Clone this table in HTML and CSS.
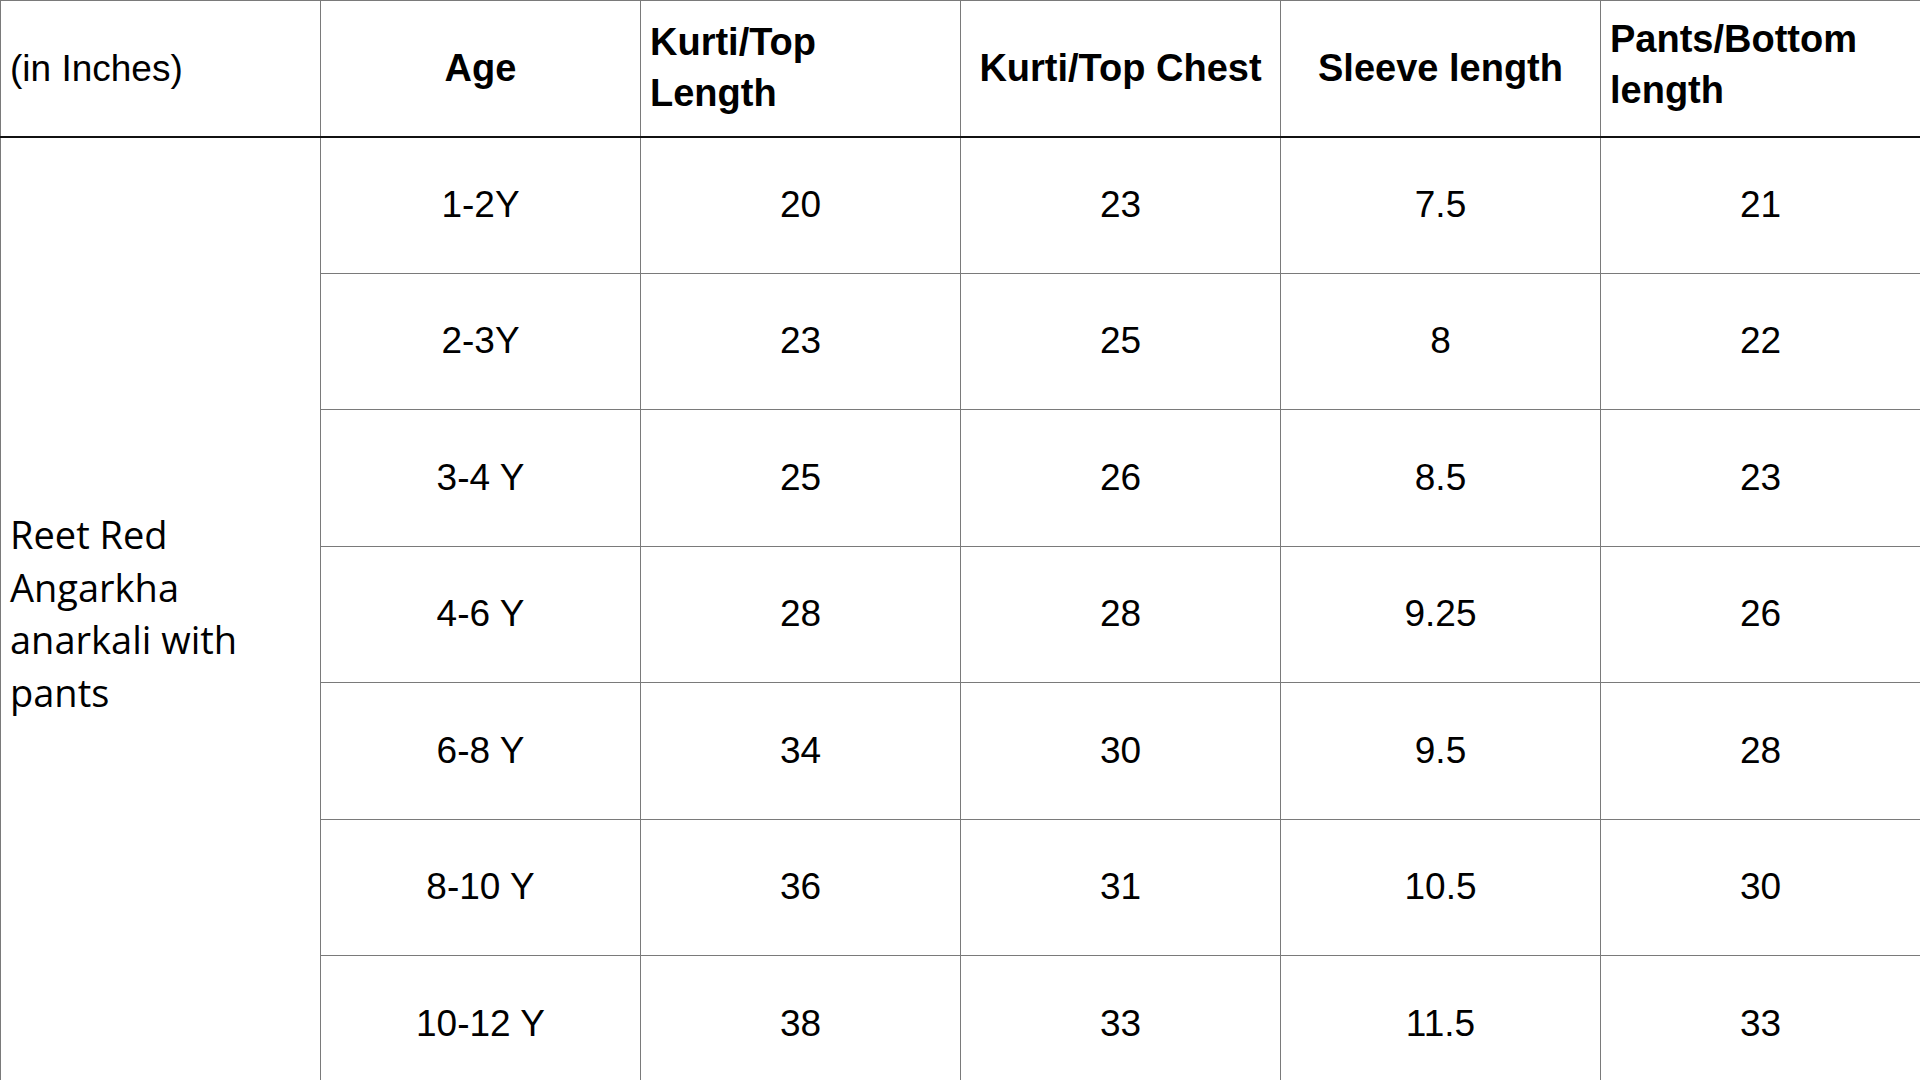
FILE: index.html
```html
<!DOCTYPE html>
<html>
<head>
<meta charset="utf-8">
<link rel="stylesheet" href="styles.css">
</head>
<body>
<table class="size-table">
  <colgroup>
    <col class="col"><col class="col"><col class="col"><col class="col"><col class="col"><col class="col">
  </colgroup>
  <thead>
    <tr class="head-row">
      <th class="unit">(in Inches)</th>
      <th class="hc">Age</th>
      <th class="hl">Kurti/Top Length</th>
      <th class="hc">Kurti/Top Chest</th>
      <th class="hc">Sleeve length</th>
      <th class="hl hl-up">Pants/Bottom length</th>
    </tr>
  </thead>
  <tbody>
    <tr class="row">
      <td class="product" rowspan="7">Reet Red Angarkha anarkali with pants</td>
      <td>1-2Y</td><td>20</td><td>23</td><td>7.5</td><td>21</td>
    </tr>
    <tr class="row"><td>2-3Y</td><td>23</td><td>25</td><td>8</td><td>22</td></tr>
    <tr class="row"><td>3-4 Y</td><td>25</td><td>26</td><td>8.5</td><td>23</td></tr>
    <tr class="row"><td>4-6 Y</td><td>28</td><td>28</td><td>9.25</td><td>26</td></tr>
    <tr class="row"><td>6-8 Y</td><td>34</td><td>30</td><td>9.5</td><td>28</td></tr>
    <tr class="row"><td>8-10 Y</td><td>36</td><td>31</td><td>10.5</td><td>30</td></tr>
    <tr class="row"><td>10-12 Y</td><td>38</td><td>33</td><td>11.5</td><td>33</td></tr>
  </tbody>
</table>
</body>
</html>
```
FILE: styles.css
```css
html, body {
  margin: 0;
  padding: 0;
  background: #ffffff;
  overflow: hidden;
}

.size-table {
  width: 1920px;
  table-layout: fixed;
  border-collapse: collapse;
  font-family: "Liberation Sans", Arial, sans-serif;
  color: #000;
}

.col {
  width: 320px;
}

.size-table th,
.size-table td {
  border: 1px solid #7a7a7a;
  padding: 0 9px;
  vertical-align: middle;
}

.head-row {
  height: 136px;
}

.head-row th {
  border-bottom: 2px solid #111;
  font-size: 38px;
  font-weight: 700;
  line-height: 51px;
}

.head-row th.unit {
  font-weight: 400;
  text-align: left;
  font-size: 37px;
}

.head-row th.hc {
  text-align: center;
}

.head-row th.hl {
  text-align: left;
}

.head-row th.hl-up {
  padding-bottom: 6px;
}

.row {
  height: 136.5px;
}

.row td {
  text-align: center;
  font-size: 37px;
  line-height: 44px;
}

.row td.product {
  text-align: left;
  font-family: "Open Sans", sans-serif;
  font-size: 38px;
  line-height: 52.5px;
  padding-left: 9px;
  padding-bottom: 3px;
}
```
